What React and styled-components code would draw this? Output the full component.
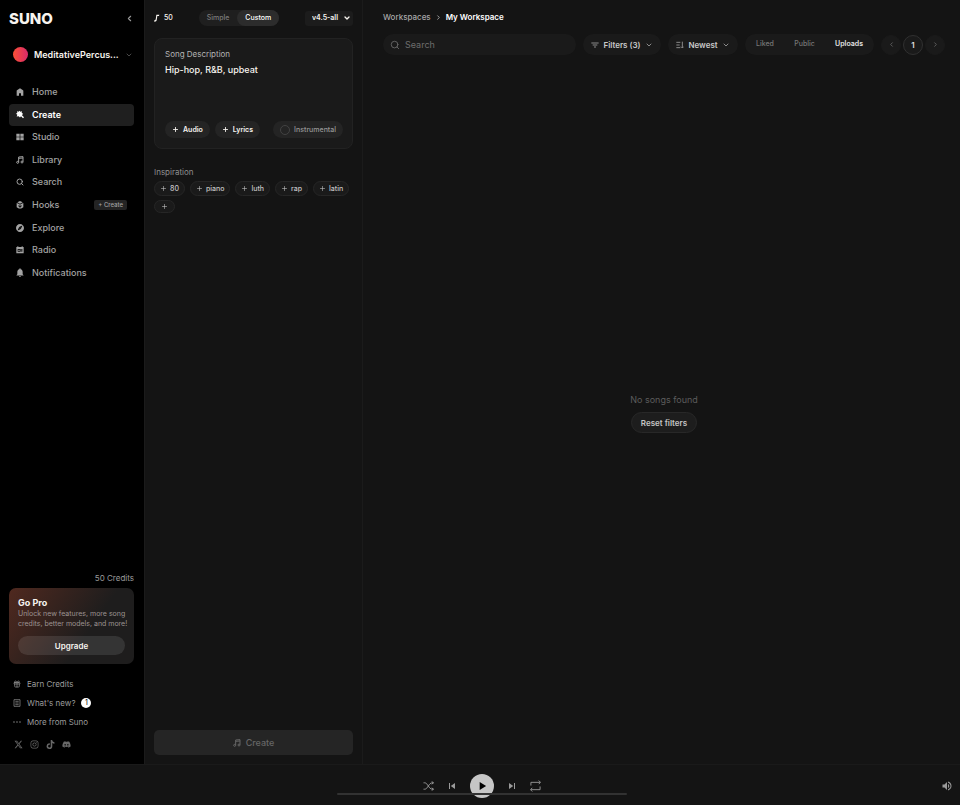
import { useState } from "react";
import styled, { createGlobalStyle, css } from "styled-components";
import {
  ChevronDown,
  ChevronLeft,
  ChevronRight,
  Gift,
  Plus,
  Search,
} from "lucide-react";
import {
  MdExplore,
  MdNotifications,
  MdPlayArrow,
  MdSkipNext,
  MdSkipPrevious,
  MdVolumeUp,
} from "react-icons/md";
import { FaDiscord, FaInstagram, FaTiktok, FaXTwitter } from "react-icons/fa6";

const GlobalStyle = createGlobalStyle`
  *, *::before, *::after {
    box-sizing: border-box;
  }
  body {
    margin: 0;
    background: #141414;
    color: #f7f4ef;
    font-family: Inter, "Liberation Sans", sans-serif;
    font-size: 9px;
    line-height: 12px;
  }
  button, input, select, textarea {
    margin: 0;
    padding: 0;
    border: 0;
    background: none;
    color: inherit;
    font: inherit;
  }
  button {
    cursor: pointer;
  }
  a {
    color: inherit;
    text-decoration: none;
  }
  svg {
    display: block;
    flex-shrink: 0;
  }
`;

// Iconos propios
const HomeIcon = () => (
  <svg width="8" height="8" viewBox="0 0 24 24" fill="currentColor">
    <path d="M12 1 3 7q-1 1-1 2v14h7v-7h6v7h7V9q0-1-1-2z" />
  </svg>
);

const CreateIcon = () => (
  <svg width="9" height="9" viewBox="0 0 24 24" fill="currentColor">
    <path d="m10 1 3 3 5-2-1 5 4 3-3 4 6 6-3 3-6-6-3 4-4-4-6 1 2-5-4-3 4-3-1-5 5 2z" />
  </svg>
);

const StudioIcon = () => (
  <svg width="8" height="8" viewBox="0 0 24 24" fill="currentColor">
    <path d="M1 2h10v9H1zM13 2h10v9H13zM1 13h10v9H1zM13 13h10v9H13z" />
  </svg>
);

const NotesIcon = ({ size = 8 }) => (
  <svg width={size} height={size} viewBox="0 0 24 24" fill="none" stroke="currentColor" strokeWidth="3">
    <path d="M8 19V3l13-1v15M8 7l13-1" />
    <circle cx="5" cy="19" r="3" />
    <circle cx="18" cy="18" r="3" />
  </svg>
);

const HooksIcon = () => (
  <svg width="8" height="8" viewBox="0 0 24 24" fill="currentColor">
    <path d="M12 0 20 4l-8 4-8-4zM2 6l9 4v5l-4-2v3l4 2v6L2 19zM22 6l-9 4v5l4-2v3l-4 2v6l9-5z" />
  </svg>
);

const RadioIcon = () => (
  <svg width="8" height="8" viewBox="0 0 24 24" fill="currentColor" fillRule="evenodd">
    <path d="M4 1h3v2h10V1h3v2h3v19H1V3h3zM5 9v8h9V9zm11 0v8h3V9zM7 11h4v4H7z" />
  </svg>
);

const ArticleIcon = () => (
  <svg width="8" height="8" viewBox="0 0 24 24" fill="none" stroke="currentColor" strokeWidth="2">
    <path d="M3 2h18v20H3zM7 7h10M7 12h10M7 17h10" />
  </svg>
);

const MoreIcon = () => (
  <svg width="8" height="8" viewBox="0 0 24 24" fill="currentColor">
    <circle cx="3" cy="12" r="2" />
    <circle cx="12" cy="12" r="2" />
    <circle cx="21" cy="12" r="2" />
  </svg>
);

const NoteIcon = () => (
  <svg width="6" height="8" viewBox="0 0 18 24" fill="currentColor">
    <path d="M7 2h9l-1 4h-5L8 19c-1 3-3 4-5 4-2 0-3-1-2-3 0-2 2-3 4-3z" />
  </svg>
);

const FilterIcon = () => (
  <svg width="8" height="8" viewBox="0 0 24 24" fill="none" stroke="currentColor" strokeWidth="3">
    <path d="M1 6h22M5 12h14M9 18h6" />
  </svg>
);

const SortIcon = () => (
  <svg width="8" height="8" viewBox="0 0 24 24" fill="none" stroke="currentColor" strokeWidth="3">
    <path d="M1 4h12M1 12h10M1 20h12M19 2v19M15 17l4 4 4-4" />
  </svg>
);

const ShuffleIcon = () => (
  <svg width="11" height="10" viewBox="0 0 24 22" fill="none" stroke="currentColor" strokeWidth="2">
    <path d="M1 4h3c6 0 9 14 16 14h3M1 18h3c6 0 9-14 16-14h3M19 1l4 3-4 3M19 15l4 3-4 3" />
  </svg>
);

const RepeatIcon = () => (
  <svg width="11" height="12" viewBox="0 0 24 26" fill="none" stroke="currentColor" strokeWidth="2">
    <path d="M2 12V5h20M19 1l4 4-4 4M22 14v7H2M5 17l-4 4 4 4" />
  </svg>
);

// Estructura general
const Page = styled.div`
  display: grid;
  grid-template-rows: minmax(0, 1fr) auto;
  min-height: 100vh;
`;

const Columns = styled.div`
  display: grid;
  grid-template-columns: 145px 218px minmax(0, 1fr);
`;

const Sidebar = styled.aside`
  display: flex;
  flex-direction: column;
  padding: 10px 10px 15px 9px;
  border-right: 1px solid #1b1b1b;
  background: #000;
`;

const SidebarTop = styled.div`
  display: flex;
  align-items: center;
  justify-content: space-between;
  height: 17px;
`;

const Logo = styled.a`
  font-size: 15px;
  font-weight: 800;
  line-height: 17px;
`;

const IconButton = styled.button`
  display: flex;
  align-items: center;
  justify-content: center;
  color: ${(props) => props.$color || "#9a9a9a"};
`;

const Profile = styled.button`
  display: flex;
  align-items: center;
  gap: 6px;
  margin-top: 20px;
  padding: 0 5px 0 4px;
  font-weight: 600;
  text-align: left;

  svg {
    margin-left: auto;
    color: #6c6c6c;
  }
`;

const Avatar = styled.span`
  flex-shrink: 0;
  width: 15px;
  height: 15px;
  border-radius: 50%;
  background: linear-gradient(90deg, #fb5036, #d92a6b);
`;

const Nav = styled.nav`
  display: grid;
  grid-auto-rows: 1fr;
  min-height: 203px;
  margin-top: 19px;
`;

const NavRow = styled.div`
  display: flex;
  align-items: center;
  padding-right: 7px;
  border-radius: 4px;
  color: ${(props) => (props.$active ? "#fff" : "#a3a3a3")};
  background: ${(props) => (props.$active ? "#1f1f1f" : "none")};
`;

const NavLink = styled.a`
  display: flex;
  flex: 1;
  align-items: center;
  gap: 8px;
  padding-left: 7px;
  font-weight: ${(props) => (props.$active ? 600 : 500)};

  svg {
    width: 8px;
    overflow: visible;
  }
`;

const NavBadge = styled.button`
  padding: 0 4px;
  border-radius: 2px;
  background: #242424;
  color: #a3a3a3;
  font-size: 6px;
  font-weight: 500;
  line-height: 10px;
`;

const SidebarBottom = styled.div`
  display: flex;
  flex-direction: column;
  margin-top: auto;
`;

const Credits = styled.span`
  margin-bottom: 4px;
  color: #9b9b9b;
  font-size: 8px;
  text-align: right;
`;

const ProCard = styled.section`
  padding: 9px;
  border-radius: 7px;
  background: linear-gradient(125deg, #50291f 0%, #1e1d1d 62%);
`;

const ProTitle = styled.h2`
  margin: 0;
  font-size: 9px;
  font-weight: 700;
  line-height: 12px;
`;

const ProText = styled.p`
  margin: 0 0 7px;
  color: #9c9391;
  font-size: 7px;
  line-height: 10px;
  white-space: nowrap;
`;

const UpgradeButton = styled.button`
  width: 100%;
  height: 19px;
  border-radius: 10px;
  background: rgba(255, 255, 255, 0.1);
  font-size: 8px;
  font-weight: 600;
`;

const FooterLinks = styled.div`
  display: grid;
  gap: 7px;
  padding: 14px 0 12px 4px;
`;

const FooterLink = styled.a`
  display: flex;
  align-items: center;
  gap: 6px;
  color: #9b9b9b;
  font-size: 8px;
`;

const Count = styled.span`
  width: 10px;
  height: 10px;
  border-radius: 50%;
  background: #fff;
  color: #000;
  font-size: 7px;
  line-height: 10px;
  text-align: center;
`;

const Socials = styled.div`
  display: flex;
  align-items: center;
  gap: 7px;
  padding-left: 5px;
  color: #686868;
  line-height: 9px;
`;

// Panel de creación
const CreatePanel = styled.section`
  display: flex;
  flex-direction: column;
  padding: 10px 9px 9px;
  border-right: 1px solid #1b1b1b;
`;

const CreateHeader = styled.header`
  display: flex;
  align-items: center;
  justify-content: space-between;
  height: 16px;
  margin-bottom: 12px;
  font-size: 7px;
  font-weight: 500;
`;

const Balance = styled.span`
  display: flex;
  align-items: center;
  gap: 4px;
`;

const Switcher = styled.div`
  display: flex;
  border-radius: 8px;
  background: #1f1f1f;
`;

const SwitchOption = styled.button`
  padding: 0 8px;
  border-radius: 8px;
  line-height: 16px;
  color: ${(props) => (props.$active ? "#fff" : "#7b7b7b")};
  background: ${(props) => (props.$active ? "#2c2c2c" : "none")};
`;

const VersionSelect = styled.label`
  display: grid;
  grid-template-columns: 1fr 10px;
  align-items: center;
  width: 48px;
  border-radius: 3px;
  background: #1c1c1c;

  select {
    grid-area: 1 / 1 / 2 / 3;
    height: 15px;
    padding-left: 7px;
    appearance: none;
    outline: none;
    font-weight: 600;
  }
  svg {
    grid-area: 1 / 2 / 2 / 3;
    pointer-events: none;
  }
`;

const PromptCard = styled.div`
  display: flex;
  flex-direction: column;
  padding: 9px 9px 10px 10px;
  border: 1px solid #222;
  border-radius: 8px;
  background: #1a1a1a;
`;

const PromptLabel = styled.label`
  color: #b4b4b4;
  font-size: 8px;
`;

const PromptInput = styled.textarea`
  width: 100%;
  height: 54px;
  margin: 4px 0 3px;
  resize: none;
  outline: none;
  font-size: 9px;
  font-weight: 500;
`;

const PromptActions = styled.div`
  display: flex;
  gap: 5px;
`;

const pill = css`
  display: flex;
  align-items: center;
  height: 17px;
  border-radius: 9px;
  background: #242424;
  font-size: 7px;
`;

const PillButton = styled.button`
  ${pill}
  gap: 4px;
  padding: 0 7px;
  font-weight: 600;
`;

const InstrumentalLabel = styled.label`
  ${pill}
  gap: 4px;
  margin-left: auto;
  padding: 0 7px;
  color: #979797;
  font-weight: 500;

  input {
    width: 10px;
    height: 10px;
    border: 1px solid #424242;
    border-radius: 50%;
    appearance: none;
  }
  input:checked {
    background: #979797;
  }
`;

const InspirationTitle = styled.h3`
  margin: 17px 0 3px;
  color: #8f8f8f;
  font-size: 8px;
  font-weight: 400;
`;

const Chips = styled.div`
  display: flex;
  flex-wrap: wrap;
  gap: 4px 5px;
`;

const Chip = styled.button`
  display: flex;
  align-items: center;
  gap: 3px;
  height: ${(props) => (props.$empty ? 13 : 15)}px;
  padding: 0 ${(props) => (props.$empty ? 6 : 5)}px;
  border: 1px solid #262626;
  border-radius: 8px;
  background: #1a1a1a;
  color: #c5c5c5;
  font-size: 7px;
  font-weight: 500;
`;

const CreateButton = styled.button`
  display: flex;
  align-items: center;
  justify-content: center;
  gap: 5px;
  height: 25px;
  margin-top: auto;
  border-radius: 5px;
  background: #252525;
  color: #666;
  font-weight: 500;
`;

// Espacio de trabajo
const Workspace = styled.main`
  display: flex;
  flex-direction: column;
  padding: 11px 15px 0 20px;
`;

const Breadcrumb = styled.nav`
  display: flex;
  align-items: center;
  gap: 4px;
  margin-bottom: 11px;
  color: #a8a8a8;
  font-size: 8px;
  font-weight: 500;

  strong {
    color: #fff;
    font-weight: 600;
  }
`;

const Toolbar = styled.div`
  display: flex;
  align-items: center;
  gap: 7px;
`;

const SearchBox = styled.label`
  display: flex;
  flex: 1;
  align-items: center;
  gap: 5px;
  min-width: 0;
  height: 21px;
  padding: 0 7px;
  border-radius: 11px;
  background: #1a1a1a;
  color: #6d6d6d;

  input {
    width: 100%;
    min-width: 0;
    outline: none;
  }
  input::placeholder {
    color: #6d6d6d;
  }
`;

const ToolbarButton = styled.button`
  display: flex;
  align-items: center;
  justify-content: center;
  gap: 4px;
  width: ${(props) => props.$width}px;
  height: 21px;
  border-radius: 11px;
  background: #1a1a1a;
  color: #c9c9c9;
  font-size: 8px;
  font-weight: 600;

  svg {
    color: #8a8a8a;
  }
`;

const Tabs = styled.div`
  display: flex;
  justify-content: space-between;
  width: 129px;
  height: 21px;
  padding: 0 11px 2px;
  border-radius: 11px;
  background: #1a1a1a;
`;

const Tab = styled.button`
  color: ${(props) => (props.$active ? "#e4e4e4" : "#777")};
  font-size: 7px;
  font-weight: ${(props) => (props.$active ? 600 : 500)};
`;

const Pages = styled.div`
  display: flex;
  gap: 2px;
`;

const PageButton = styled.button`
  display: flex;
  align-items: center;
  justify-content: center;
  width: 20px;
  height: 20px;
  border: 1px solid ${(props) => (props.$active ? "#303030" : "#1a1a1a")};
  border-radius: 50%;
  background: #1a1a1a;
  color: ${(props) => (props.$active ? "#e0e0e0" : "#626262")};
  font-size: 8px;
  font-weight: 600;
`;

const EmptyState = styled.div`
  display: flex;
  flex: 1;
  flex-direction: column;
  align-items: center;
  justify-content: center;
  gap: 6px;
  padding-top: 8px;
  color: #5c5c5c;
`;

const ResetButton = styled.button`
  height: 21px;
  padding: 0 9px;
  border: 1px solid #282828;
  border-radius: 11px;
  background: #1d1d1d;
  color: #c5c5c5;
  font-size: 8px;
  font-weight: 600;
`;

// Reproductor
const Player = styled.footer`
  display: grid;
  grid-template-columns: 1fr auto 1fr;
  align-items: center;
  position: relative;
  height: 41px;
  padding: 2px 7px 0 10px;
  border-top: 1px solid #1a1a1a;
  color: #858585;
`;

const Controls = styled.div`
  display: flex;
  grid-column: 2;
  align-items: center;
  gap: 12px;
`;

const PlayButton = styled.button`
  display: flex;
  align-items: center;
  justify-content: center;
  width: 24px;
  height: 24px;
  border-radius: 50%;
  background: #c6c6c6;
  color: #000;
`;

const Volume = styled(IconButton)`
  justify-self: end;
`;

// La barra pasa por encima del botón de reproducir
const Progress = styled.div`
  position: absolute;
  right: 0;
  bottom: 10px;
  left: 3px;
  width: 30%;
  min-width: 290px;
  height: 2px;
  margin: 0 auto;
  border-radius: 1px;
  background: #323232;
`;

const navItems = [
  { label: "Home", icon: <HomeIcon /> },
  { label: "Create", icon: <CreateIcon />, active: true },
  { label: "Studio", icon: <StudioIcon /> },
  { label: "Library", icon: <NotesIcon /> },
  { label: "Search", icon: <Search size={8} strokeWidth={3} /> },
  { label: "Hooks", icon: <HooksIcon />, badge: "+ Create" },
  { label: "Explore", icon: <MdExplore size={8} viewBox="2 2 20 20" /> },
  { label: "Radio", icon: <RadioIcon /> },
  { label: "Notifications", icon: <MdNotifications size={9} viewBox="3 2 18 20" /> },
];

const inspirations = ["80", "piano", "luth", "rap", "latin"];

const AppSidebar = () => (
  <Sidebar>
    <SidebarTop>
      <Logo href="#">SUNO</Logo>
      <IconButton aria-label="Collapse sidebar">
        <ChevronLeft size={9} strokeWidth={3} />
      </IconButton>
    </SidebarTop>
    <Profile>
      <Avatar />
      MeditativePercus...
      <ChevronDown size={8} />
    </Profile>
    <Nav>
      {navItems.map((item) => (
        <NavRow key={item.label} $active={item.active}>
          <NavLink href="#" $active={item.active}>
            {item.icon}
            {item.label}
          </NavLink>
          {item.badge && <NavBadge>{item.badge}</NavBadge>}
        </NavRow>
      ))}
    </Nav>
    <SidebarBottom>
      <Credits>50 Credits</Credits>
      <ProCard>
        <ProTitle>Go Pro</ProTitle>
        <ProText>
          Unlock new features, more song
          <br />
          credits, better models, and more!
        </ProText>
        <UpgradeButton>Upgrade</UpgradeButton>
      </ProCard>
      <FooterLinks>
        <FooterLink href="#">
          <Gift size={8} />
          Earn Credits
        </FooterLink>
        <FooterLink href="#">
          <ArticleIcon />
          What's new?
          <Count>1</Count>
        </FooterLink>
        <FooterLink href="#">
          <MoreIcon />
          More from Suno
        </FooterLink>
      </FooterLinks>
      <Socials>
        <a href="#" aria-label="X"><FaXTwitter size={9} /></a>
        <a href="#" aria-label="Instagram"><FaInstagram size={9} /></a>
        <a href="#" aria-label="TikTok"><FaTiktok size={9} /></a>
        <a href="#" aria-label="Discord"><FaDiscord size={9} /></a>
      </Socials>
    </SidebarBottom>
  </Sidebar>
);

const SongForm = () => {
  const [mode, setMode] = useState("Custom");

  return (
    <CreatePanel>
      <CreateHeader>
        <Balance>
          <NoteIcon />
          50
        </Balance>
        <Switcher>
          {["Simple", "Custom"].map((option) => (
            <SwitchOption key={option} $active={mode === option} onClick={() => setMode(option)}>
              {option}
            </SwitchOption>
          ))}
        </Switcher>
        <VersionSelect>
          <select aria-label="Model version" defaultValue="v4.5-all">
            <option>v4.5-all</option>
          </select>
          <ChevronDown size={8} strokeWidth={4} />
        </VersionSelect>
      </CreateHeader>
      <PromptCard>
        <PromptLabel htmlFor="description">Song Description</PromptLabel>
        <PromptInput id="description" defaultValue="Hip-hop, R&B, upbeat" />
        <PromptActions>
          <PillButton>
            <Plus size={7} strokeWidth={3} />
            Audio
          </PillButton>
          <PillButton>
            <Plus size={7} strokeWidth={3} />
            Lyrics
          </PillButton>
          <InstrumentalLabel>
            <input type="checkbox" />
            Instrumental
          </InstrumentalLabel>
        </PromptActions>
      </PromptCard>
      <InspirationTitle>Inspiration</InspirationTitle>
      <Chips>
        {inspirations.map((name) => (
          <Chip key={name}>
            <Plus size={7} />
            {name}
          </Chip>
        ))}
        <Chip $empty aria-label="Add style">
          <Plus size={7} />
        </Chip>
      </Chips>
      <CreateButton>
        <NotesIcon />
        Create
      </CreateButton>
    </CreatePanel>
  );
};

const WorkspaceView = () => {
  const [tab, setTab] = useState("Uploads");

  return (
    <Workspace>
      <Breadcrumb>
        <a href="#">Workspaces</a>
        <ChevronRight size={7} strokeWidth={3} />
        <strong>My Workspace</strong>
      </Breadcrumb>
      <Toolbar>
        <SearchBox>
          <Search size={10} />
          <input type="text" placeholder="Search" aria-label="Search" />
        </SearchBox>
        <ToolbarButton $width={78}>
          <FilterIcon />
          Filters (3)
          <ChevronDown size={8} strokeWidth={3} />
        </ToolbarButton>
        <ToolbarButton $width={70}>
          <SortIcon />
          Newest
          <ChevronDown size={8} strokeWidth={3} />
        </ToolbarButton>
        <Tabs>
          {["Liked", "Public", "Uploads"].map((name) => (
            <Tab key={name} $active={tab === name} onClick={() => setTab(name)}>
              {name}
            </Tab>
          ))}
        </Tabs>
        <Pages>
          <PageButton aria-label="Previous page">
            <ChevronLeft size={7} strokeWidth={3} />
          </PageButton>
          <PageButton $active>1</PageButton>
          <PageButton aria-label="Next page">
            <ChevronRight size={7} strokeWidth={3} />
          </PageButton>
        </Pages>
      </Toolbar>
      <EmptyState>
        No songs found
        <ResetButton>Reset filters</ResetButton>
      </EmptyState>
    </Workspace>
  );
};

const PlayerBar = () => (
  <Player>
    <Controls>
      <IconButton aria-label="Shuffle"><ShuffleIcon /></IconButton>
      <IconButton aria-label="Previous"><MdSkipPrevious size={12} /></IconButton>
      <PlayButton aria-label="Play"><MdPlayArrow size={14} /></PlayButton>
      <IconButton aria-label="Next"><MdSkipNext size={12} /></IconButton>
      <IconButton aria-label="Repeat"><RepeatIcon /></IconButton>
    </Controls>
    <Volume aria-label="Volume"><MdVolumeUp size={12} /></Volume>
    <Progress />
  </Player>
);

const App = () => (
  <>
    <GlobalStyle />
    <Page>
      <Columns>
        <AppSidebar />
        <SongForm />
        <WorkspaceView />
      </Columns>
      <PlayerBar />
    </Page>
  </>
);

export default App;
